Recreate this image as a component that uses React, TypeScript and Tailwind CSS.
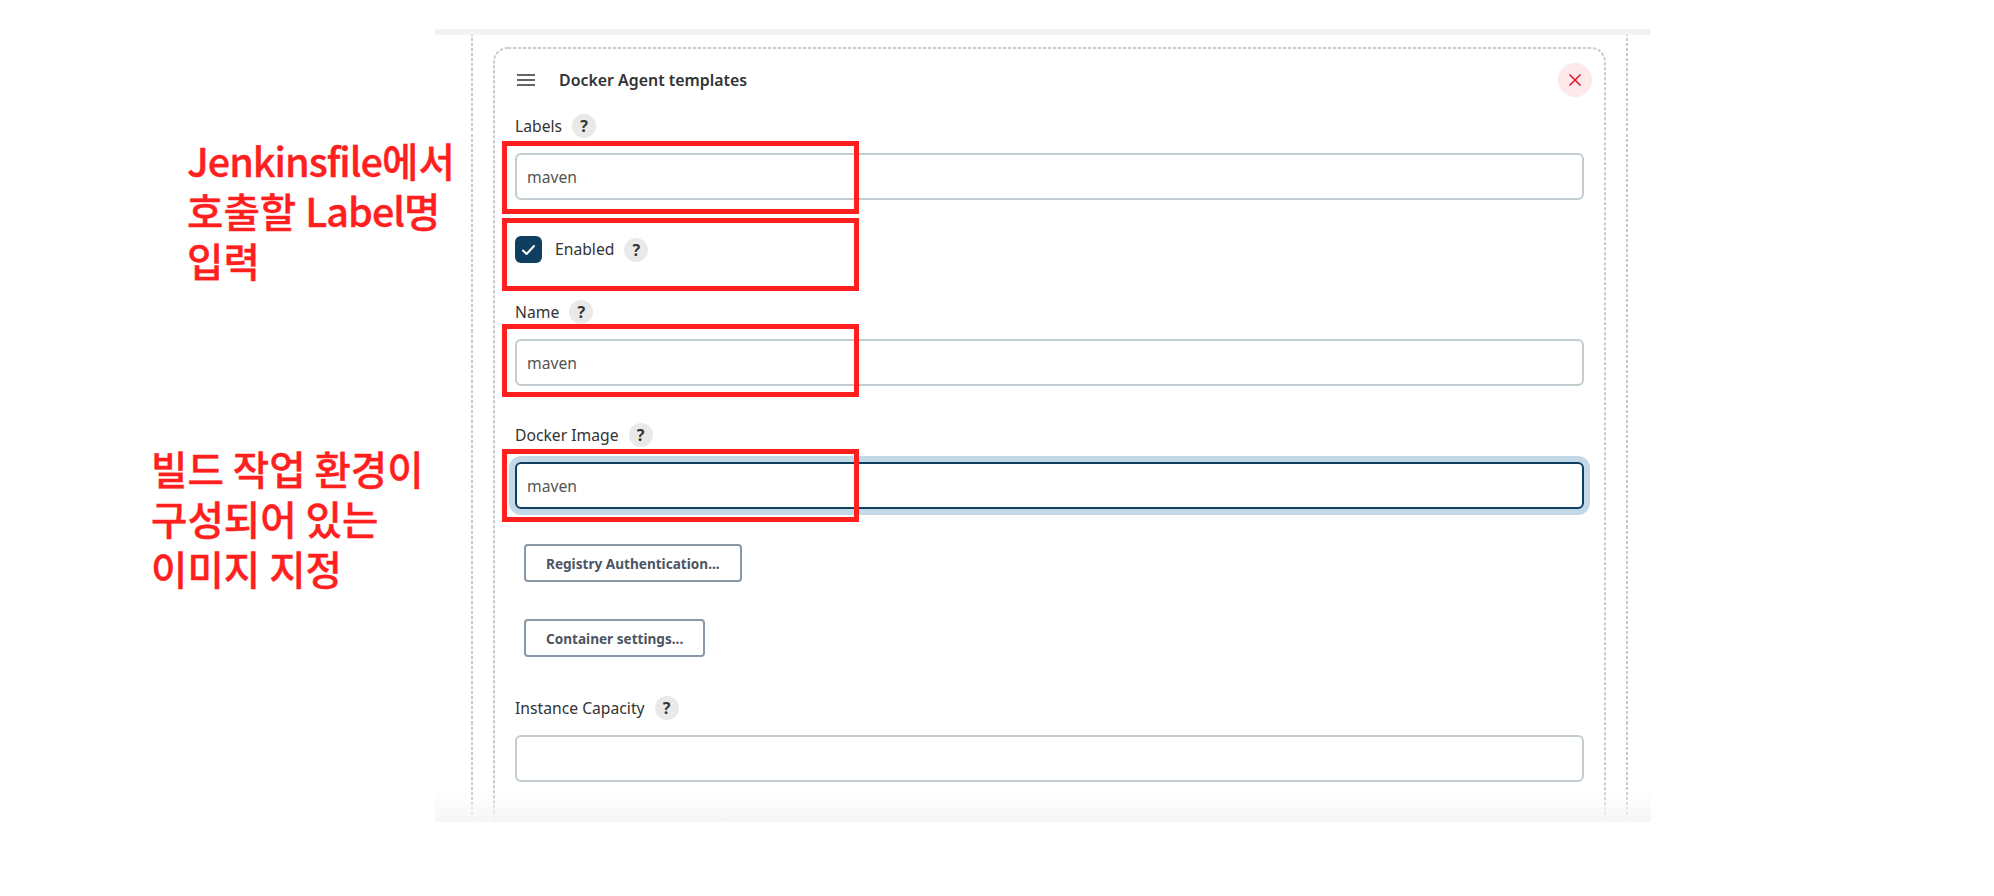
import React from "react";

function RedBox({ className = "" }: { className?: string }) {
  return <div className={"absolute left-[-13px] w-[357px] h-[73px] border-[5px] border-[#ff1f1f] pointer-events-none " + className} />;
}

function Help() {
  return (
    <span className="flex h-6 w-6 shrink-0 items-center justify-center rounded-full bg-[#e9e9e9] text-[16px] font-bold leading-none text-[#333]">?</span>
  );
}

function Label({ text }: { text: string }) {
  return (
    <div className="flex h-6 items-center gap-[10px] text-[15.7px] leading-6 text-[#333]">
      <span className="whitespace-nowrap">{text}</span>
      <Help />
    </div>
  );
}

function TextInput({ value = "", focused = false }: { value?: string; focused?: boolean }) {
  return (
    <input
      readOnly
      value={value}
      className={
        "block h-[47px] w-full rounded-[6px] border-2 bg-white pl-[10px] text-[15.7px] text-[#555] outline-none font-['Noto_Sans'] " +
        (focused ? "border-[#0e3f61] shadow-[0_0_0_6px_#c3d9e7]" : "border-[#c3ccd1]")
      }
    />
  );
}

function Field({ label, value, focused, boxClass }: { label: string; value?: string; focused?: boolean; boxClass?: string }) {
  return (
    <div>
      <Label text={label} />
      <div className="relative mt-[15px]">
        <TextInput value={value} focused={focused} />
        {boxClass && <RedBox className={boxClass} />}
      </div>
    </div>
  );
}

function OutlineButton({ text }: { text: string }) {
  return (
    <button className="ml-[9px] block h-[38px] rounded-[4px] border-2 border-[#8a97a5] bg-white px-[20px] pt-[3px] text-[13.6px] font-bold text-[#4b5563] whitespace-nowrap">
      {text}
    </button>
  );
}

export default function App() {
  return (
    <div className="flex h-[896px] w-[1994px] overflow-hidden bg-white pt-[29px] font-['Noto_Sans','Noto_Sans_CJK_KR',sans-serif]">
      <div className="w-[435px] shrink-0 whitespace-nowrap text-[39.6px] font-medium leading-[50px] text-[#ff1f1f] [-webkit-text-stroke:0.4px_#ff1f1f] font-['Noto_Sans_CJK_KR',sans-serif]">
        <div className="mt-[106px] pl-[187px]">
          <div><span className="tracking-[-1px]">Jenkinsfile</span>에서</div>
          <div>호출할 <span className="tracking-[-1px]">Label</span>명</div>
          <div>입력</div>
        </div>
        <div className="mt-[158px] pl-[151px]">
          <div>빌드 작업 환경이</div>
          <div>구성되어 있는</div>
          <div>이미지 지정</div>
        </div>
      </div>

      <div className="w-[1216px] shrink-0">
        <div className="h-[6px] bg-[#f3f3f3]" />
        <div className="relative h-[787px] overflow-hidden">
          <div className="ml-[36px] mr-[23px] h-full border-x-2 border-solid [border-image:repeating-linear-gradient(to_bottom,#c3ccd1_0_3px,transparent_3px_5px)_2] px-[20px] pt-[12px]">
            <div className="relative h-[900px] border-2 border-transparent pl-[20px] pr-[20px] pt-[14px]">
              <svg className="absolute left-[-2px] top-[-2px] pointer-events-none" width="1113" height="900" fill="none">
                <rect x="1" y="1" width="1111" height="898" rx="14" stroke="#c3ccd1" strokeWidth="2" strokeDasharray="3.2 1.8" />
              </svg>
              <div className="flex h-[34px] items-center">
                <svg width="18" height="12" viewBox="0 0 18 12" className="ml-[2px] text-[#333]" fill="none" stroke="currentColor" strokeWidth="1.5">
                  <path d="M0 1h18M0 6h18M0 11h18" />
                </svg>
                <span className="ml-[24px] mt-[2px] text-[15.9px] font-semibold text-[#333] whitespace-nowrap">Docker Agent templates</span>
                <span className="ml-auto -mr-[8px] flex h-[34px] w-[34px] items-center justify-center rounded-full bg-[#fde8ea]">
                  <svg width="14" height="14" viewBox="0 0 14 14" fill="none" stroke="#e6112d" strokeWidth="1.5">
                    <path d="M1.5 1.5l11 11M12.5 1.5l-11 11" />
                  </svg>
                </span>
              </div>

              <div className="mt-[17px]">
                <Field label="Labels" value="maven" boxClass="top-[-12px]" />
              </div>

              <div className="relative mt-[36px] flex h-[27px] items-center text-[15.7px] text-[#333]">
                <span className="flex h-[27px] w-[27px] items-center justify-center rounded-[6px] bg-[#0e3f61]">
                  <svg width="15" height="12" viewBox="0 0 15 12" fill="none" stroke="#fff" strokeWidth="2" strokeLinecap="round" strokeLinejoin="round">
                    <path d="M2 6.5l3.6 3.5L13 2" />
                  </svg>
                </span>
                <span className="ml-[13px]">Enabled</span>
                <span className="ml-[10px]"><Help /></span>
                <RedBox className="top-[-18px]" />
              </div>

              <div className="mt-[37px]">
                <Field label="Name" value="maven" boxClass="top-[-15px]" />
              </div>

              <div className="mt-[37px]">
                <Field label="Docker Image" value="maven" focused boxClass="top-[-13px]" />
              </div>

              <div className="mt-[35px]">
                <OutlineButton text="Registry Authentication..." />
              </div>
              <div className="mt-[37px]">
                <OutlineButton text="Container settings..." />
              </div>

              <div className="mt-[39px]">
                <Field label="Instance Capacity" />
              </div>

              <div className="mt-[36px] ml-[196px] h-6 w-6 rounded-full bg-[#e9e9e9]" />
            </div>
          </div>
          <div className="absolute inset-x-0 bottom-0 h-[32px] bg-gradient-to-b from-transparent to-[#f6f6f6] pointer-events-none" />
        </div>
      </div>
    </div>
  );
}
